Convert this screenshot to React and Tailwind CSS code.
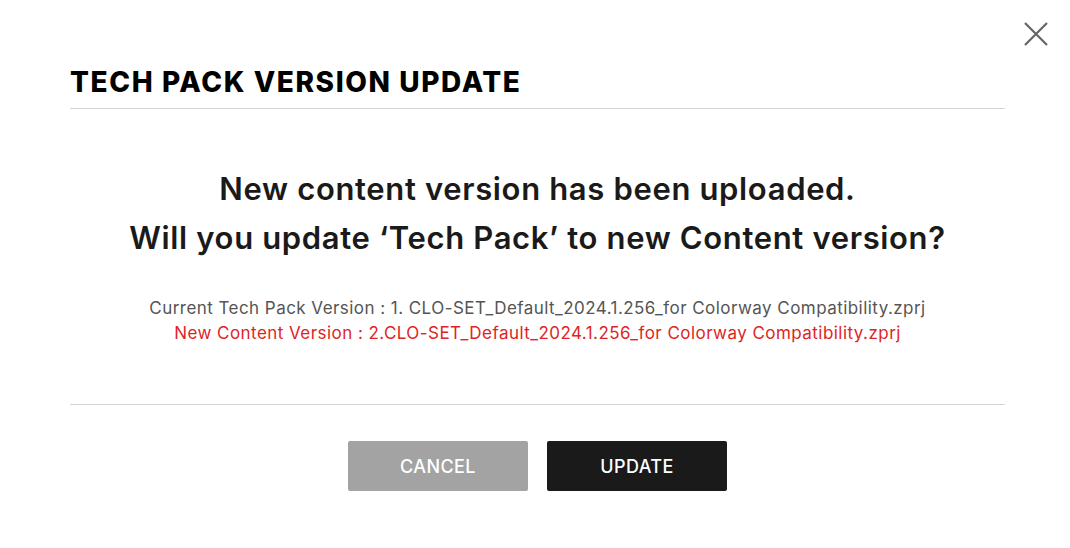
import React from 'react'

const App = () => {
  return (
    <div className="relative w-[1070px] h-[548px] bg-white" style={{ fontFamily: 'Inter, "Noto Sans", sans-serif' }}>
      {/* Close */}
      <button className="absolute right-[21px] top-[21px] w-[26px] h-[26px] flex items-center justify-center">
        <svg width="26" height="26" viewBox="0 0 26 26" fill="none">
          <path d="M2 2L24 24M24 2L2 24" stroke="#666666" strokeWidth="2.2" />
        </svg>
      </button>

      <div className="pl-[70px] pr-[65px] pt-[66px]">
        {/* Header */}
        <div className="pb-[9px] border-b border-[#d6d6d6]">
          <h2 className="text-[28px] leading-[33px] font-extrabold text-black tracking-[1.6px]">TECH PACK VERSION UPDATE</h2>
        </div>

        {/* Body */}
        <div className="pt-[55px] pb-[58px] border-b border-[#d6d6d6] text-center">
          <p className="text-[31px] leading-[49px] font-semibold text-[#1a1a1a] tracking-[0.65px]">
            New content version has been uploaded.<br />
            Will you update ‘Tech Pack’ to new Content version?
          </p>
          <div className="mt-[34px] text-[17px] leading-[25px] tracking-[0.45px]">
            <p className="text-[#555555]">Current Tech Pack Version : 1. CLO-SET_Default_2024.1.256_for Colorway Compatibility.zprj</p>
            <p className="text-[#e02424]">New Content Version : 2.CLO-SET_Default_2024.1.256_for Colorway Compatibility.zprj</p>
          </div>
        </div>

        {/* Actions */}
        <div className="flex justify-center gap-[19px] pt-[36px]">
          <button className="w-[180px] h-[50px] rounded-[2px] bg-[#a3a3a4] text-white text-[18px] font-medium tracking-[0.4px]">CANCEL</button>
          <button className="w-[180px] h-[50px] rounded-[2px] bg-[#1a1a1a] text-white text-[18px] font-medium tracking-[0.4px]">UPDATE</button>
        </div>
      </div>
    </div>
  )
}

export default App
